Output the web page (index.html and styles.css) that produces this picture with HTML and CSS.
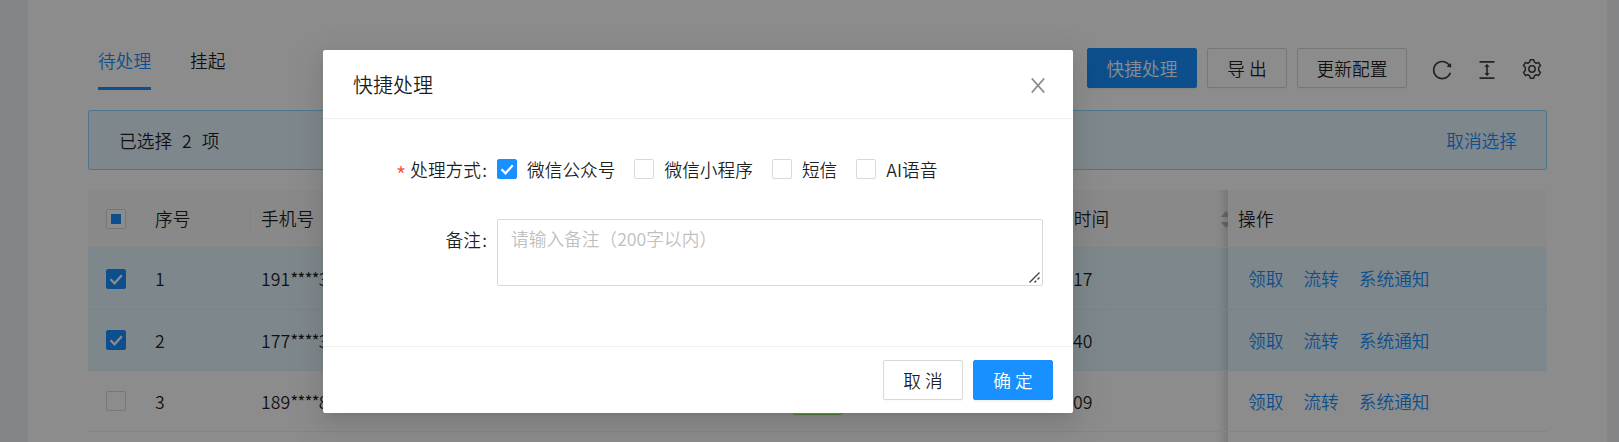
FILE: index.html
```html
<!DOCTYPE html>
<html lang="zh-CN">
<head>
<meta charset="utf-8">
<title>快捷处理</title>
<link rel="stylesheet" href="styles.css">
</head>
<body>
<main class="card">
  <header class="toolbar">
    <nav class="tabs">
      <a class="tab tab-active">待处理</a>
      <a class="tab">挂起</a>
    </nav>
    <div class="actions">
      <button class="btn btn-primary">快捷处理</button>
      <button class="btn btn-spaced">导出</button>
      <button class="btn">更新配置</button>
      <div class="tools">
        <svg class="icon" viewBox="64 64 896 896"><path d="M909.100 209.300l-56.400 44.100C775.800 155.100 656.200 92 521.900 92 290 92 102.300 279.500 102 511.500 101.700 743.700 289.800 932 521.900 932c181.300 0 335.800-115 394.600-276.100 1.500-4.200-.7-8.900-4.900-10.300l-56.700-19.500a8 8 0 00-10.100 4.800c-1.800 5-3.800 10-5.900 14.900-17.300 41-42.100 77.800-73.700 109.400A344.770 344.770 0 01655.900 829c-42.300 17.900-87.400 27-133.800 27-46.500 0-91.500-9.100-133.800-27A341.500 341.500 0 01279 755.200a342.160 342.160 0 01-73.700-109.400c-17.900-42.400-27-87.400-27-133.900s9.100-91.500 27-133.900c17.300-41 42.100-77.800 73.700-109.400 31.600-31.600 68.400-56.400 109.300-73.800 42.300-17.900 87.400-27 133.800-27 46.500 0 91.500 9.100 133.800 27a341.500 341.500 0 01109.300 73.800c9.900 9.900 19.200 20.400 27.800 31.400l-60.200 47a8 8 0 003 14.100l175.600 43c5 1.200 9.900-2.600 9.900-7.700l.8-180.900c-.1-6.600-7.800-10.300-13-6.200z"/></svg>
        <svg class="icon" viewBox="64 64 896 896"><path d="M840 836H184c-4.400 0-8 3.600-8 8v60c0 4.400 3.600 8 8 8h656c4.400 0 8-3.600 8-8v-60c0-4.400-3.600-8-8-8zm0-724H184c-4.400 0-8 3.600-8 8v60c0 4.400 3.600 8 8 8h656c4.400 0 8-3.600 8-8v-60c0-4.400-3.600-8-8-8zM610.800 378c6 0 9.400-7 5.700-11.700L515.700 238.700a7.140 7.140 0 00-11.300 0L403.600 366.300a7.230 7.230 0 005.700 11.700H476v268h-62.800c-6 0-9.400 7-5.700 11.700l100.800 127.500c2.900 3.700 8.500 3.700 11.300 0l100.800-127.500c3.700-4.700.4-11.700-5.700-11.700H548V378h62.800z"/></svg>
        <svg class="icon icon-gear" viewBox="0 0 20 20"><path d="M8.300 .7h3.400l.65 2.450 1.900 1.100 2.450-.7 1.800 3.050-1.800 1.850v3.100l1.800 1.850-1.800 3.050-2.450-.7-1.900 1.100-.65 2.450H8.300l-.65-2.450-1.900-1.100-2.450.7-1.800-3.050 1.800-1.850v-3.100L1.500 6.600l1.800-3.050 2.450.7 1.900-1.100z"/><circle cx="10" cy="10" r="3.200"/></svg>
      </div>
    </div>
  </header>

  <section class="alert">
    <span class="alert-text">已选择<span class="count">2</span>项</span>
    <a class="link">取消选择</a>
  </section>

  <section class="table">
    <div class="row head">
      <div class="c-check"><span class="box box-part"></span></div>
      <div class="c-no">序号</div>
      <div class="c-phone">手机号</div>
      <div class="c-tag"></div>
      <div class="c-time">建时间<svg class="sorter" viewBox="0 0 10 17"><path d="M0 6L5 0l5 6zM0 11h10l-5 6z"/></svg></div>
      <div class="c-ops">操作</div>
    </div>
    <div class="row selected">
      <div class="c-check"><span class="box box-on"><svg viewBox="0 0 20 20"><path d="M4.500 10.300l4 4 7.300-8"/></svg></span></div>
      <div class="c-no">1</div>
      <div class="c-phone">191<span class="stars">****</span>3</div>
      <div class="c-tag"></div>
      <div class="c-time c-val">17</div>
      <div class="c-ops"><a class="link">领取</a><a class="link">流转</a><a class="link">系统通知</a></div>
    </div>
    <div class="row selected">
      <div class="c-check"><span class="box box-on"><svg viewBox="0 0 20 20"><path d="M4.500 10.300l4 4 7.300-8"/></svg></span></div>
      <div class="c-no">2</div>
      <div class="c-phone">177<span class="stars">****</span>3</div>
      <div class="c-tag"></div>
      <div class="c-time c-val">40</div>
      <div class="c-ops"><a class="link">领取</a><a class="link">流转</a><a class="link">系统通知</a></div>
    </div>
    <div class="row">
      <div class="c-check"><span class="box"></span></div>
      <div class="c-no">3</div>
      <div class="c-phone">189<span class="stars">****</span>8</div>
      <div class="c-tag"><span class="tag"></span></div>
      <div class="c-time c-val">09</div>
      <div class="c-ops"><a class="link">领取</a><a class="link">流转</a><a class="link">系统通知</a></div>
    </div>
    <div class="row">
      <div class="c-check"></div>
      <div class="c-no"></div>
      <div class="c-phone"></div>
      <div class="c-tag"></div>
      <div class="c-time"></div>
      <div class="c-ops"></div>
    </div>
  </section>
</main>

<div class="mask"></div>

<div class="modal">
  <header class="modal-head">
    <h2 class="modal-title">快捷处理</h2>
    <svg class="close" viewBox="0 0 14 15"><path d="M.8.5l12.400 14M13.200.5L.8 14.500"/></svg>
  </header>
  <div class="modal-body">
    <div class="field">
      <span class="label"><i class="star">*</i>处理方式<b class="colon">:</b></span>
      <div class="checks">
        <label class="check"><span class="box box-on"><svg viewBox="0 0 20 20"><path d="M4.500 10.300l4 4 7.300-8"/></svg></span><span class="check-text">微信公众号</span></label>
        <label class="check"><span class="box"></span><span class="check-text">微信小程序</span></label>
        <label class="check"><span class="box"></span><span class="check-text">短信</span></label>
        <label class="check"><span class="box"></span><span class="check-text">AI语音</span></label>
      </div>
    </div>
    <div class="field">
      <span class="label">备注<b class="colon">:</b></span>
      <div class="note-wrap">
        <textarea class="note" placeholder="请输入备注（200字以内）"></textarea>
        <svg class="grip" viewBox="0 0 11 11"><path d="M.5 10.500l10-10M5.500 10.500l1.700-1.700M8.500 7.500l2-2"/></svg>
      </div>
    </div>
  </div>
  <footer class="modal-foot">
    <button class="btn btn-spaced">取消</button>
    <button class="btn btn-primary btn-spaced">确定</button>
  </footer>
</div>
</body>
</html>
```
FILE: styles.css
```css
* { box-sizing: border-box; }

html, body { height: 100%; margin: 0; overflow: hidden; }

body {
  background: #f0f2f5;
  color: rgba(0, 0, 0, 0.88);
  font-family: "Noto Sans CJK SC", sans-serif;
  font-size: 17.7px;
  font-weight: 350;
  line-height: 27.5px;
  white-space: nowrap;
}

button, textarea { font: inherit; color: inherit; }

.card { height: 442px; margin: 0 12px 0 28px; padding: 40px 60px 0; background: #fff; overflow: hidden; }

.toolbar { display: flex; justify-content: space-between; height: 70px; }
.tabs { display: flex; gap: 39px; height: 50px; padding-left: 10px; }
.tab { padding-top: 7px; }
.tab-active { color: #1890ff; border-bottom: 3px solid #1890ff; }

.actions { display: flex; gap: 10px; padding-top: 8px; }
.btn {
  width: 110px;
  height: 40px;
  padding: 2px 0 0;
  background: #fff;
  border: 1px solid #d9d9d9;
  border-radius: 2px;
  box-shadow: 0 2px 0 rgba(0, 0, 0, 0.016);
  text-align: center;
  white-space: nowrap;
}
.btn-primary { color: #fff; background: #1890ff; border-color: #1890ff; box-shadow: 0 2px 0 rgba(0, 0, 0, 0.045); }
.btn-spaced { width: 80px; padding: 2px 0 0 4px; letter-spacing: 4px; }
.tools { display: flex; gap: 25px; padding: 12px 5px 0 15px; }
.icon { width: 20px; height: 20px; fill: rgba(0, 0, 0, 0.75); }
.icon-gear { margin-top: -1px; fill: none; stroke: rgba(0, 0, 0, 0.75); stroke-width: 1.5; stroke-linejoin: round; }

.alert {
  display: flex;
  align-items: center;
  justify-content: space-between;
  height: 60px;
  padding: 1px 29px 0 30px;
  background: #e6f7ff;
  border: 1px solid #91d5ff;
  border-radius: 2px;
}
.count { margin: 0 10px; }
.link { color: #1890ff; }

.table { margin-top: 20px; }
.row { display: flex; height: 61px; border-bottom: 1px solid #f0f0f0; }
.row > div { display: flex; align-items: center; }
.head { height: 58px; background: #fafafa; }
.head + .row { height: 62px; }
.selected { background: #e6f7ff; border-color: rgba(0, 0, 0, 0.03); }
.c-check { width: 67px; padding-left: 18px; }
.row .c-no { width: 96px; padding-top: 1px; }
.head .c-no { background: linear-gradient(#f0f0f0, #f0f0f0) right center / 1px 28px no-repeat; }
.row .c-phone { width: 180px; padding: 1px 0 0 10px; }
.stars { letter-spacing: -1px; }
.c-tag { width: 607px; justify-content: center; }
.tag { width: 49px; height: 27px; margin-left: 165px; background: #f6ffed; border: 1px solid #95de64; border-radius: 2px; }
.row .c-time {
  width: 190px;
  padding: 1px 0 0 18px;
  background: linear-gradient(90deg, transparent, rgba(0, 0, 0, 0.04) 50%, rgba(0, 0, 0, 0.13)) right / 13px 100% no-repeat;
  overflow: hidden;
}
.row .c-val { padding-left: 35px; }
.sorter { flex: none; width: 10px; height: 17px; margin: 0 -3px 0 auto; fill: #aaa; }
.row .c-ops { flex: 1; gap: 20px; padding: 1px 0 0 20px; }
.head .c-ops { padding-left: 10px; }

.box { position: relative; flex: none; width: 20px; height: 20px; background: #fff; border: 1px solid #d9d9d9; border-radius: 2px; }
.box-part::after { content: ""; position: absolute; inset: 4px; background: #1890ff; }
.box-on { background: #1890ff; border-color: #1890ff; }
.box-on svg { display: block; width: 20px; height: 20px; margin: -1px; fill: none; stroke: #fff; stroke-width: 2.2; }

.mask { position: absolute; inset: 0; background: rgba(0, 0, 0, 0.45); }

.modal {
  position: absolute;
  left: 323px;
  top: 50px;
  display: flex;
  flex-direction: column;
  width: 750px;
  height: 363px;
  background: #fff;
  border-radius: 2px;
  box-shadow: 0 4px 8px -5px rgba(0, 0, 0, 0.12), 0 8px 20px rgba(0, 0, 0, 0.08), 0 11px 35px 10px rgba(0, 0, 0, 0.05);
}
.modal-head { display: flex; align-items: center; justify-content: space-between; height: 69px; padding: 0 28px 0 30px; border-bottom: 1px solid #f0f0f0; }
.modal-title { margin: 2px 0 0; font-size: 20px; font-weight: 350; }
.close { width: 14px; height: 15px; margin-top: 3px; fill: none; stroke: #8c8c8c; stroke-width: 1.8; }
.modal-body { flex: 1; padding: 30px 30px 0; }
.field { display: flex; height: 40px; margin-bottom: 30px; }
.label { width: 144px; padding: 7px 10px 0 0; text-align: right; }
.colon { display: inline-block; width: 5px; margin-left: 1px; font-weight: 350; }
.star { margin-right: 4px; color: #ff4d4f; font-size: 22px; font-style: normal; line-height: 1; vertical-align: -7px; }
.checks { display: flex; align-items: center; gap: 19px; }
.check { display: flex; align-items: center; gap: 10px; height: 42px; }
.check-text { padding-top: 2px; }
.note-wrap { position: relative; width: 546px; height: 67px; }
.note {
  display: block;
  width: 546px;
  height: 67px;
  padding: 5px 13px;
  border: 1px solid #d9d9d9;
  border-radius: 2px;
  outline: 0;
  line-height: 27.5px;
  resize: none;
}
.note::placeholder { color: #bfbfbf; }
.grip { position: absolute; right: 3px; bottom: 3px; width: 11px; height: 11px; fill: none; stroke: #444; stroke-width: 1.4; }
.modal-foot { display: flex; justify-content: flex-end; gap: 10px; height: 67px; padding: 13px 20px 0; border-top: 1px solid #f0f0f0; }
```
